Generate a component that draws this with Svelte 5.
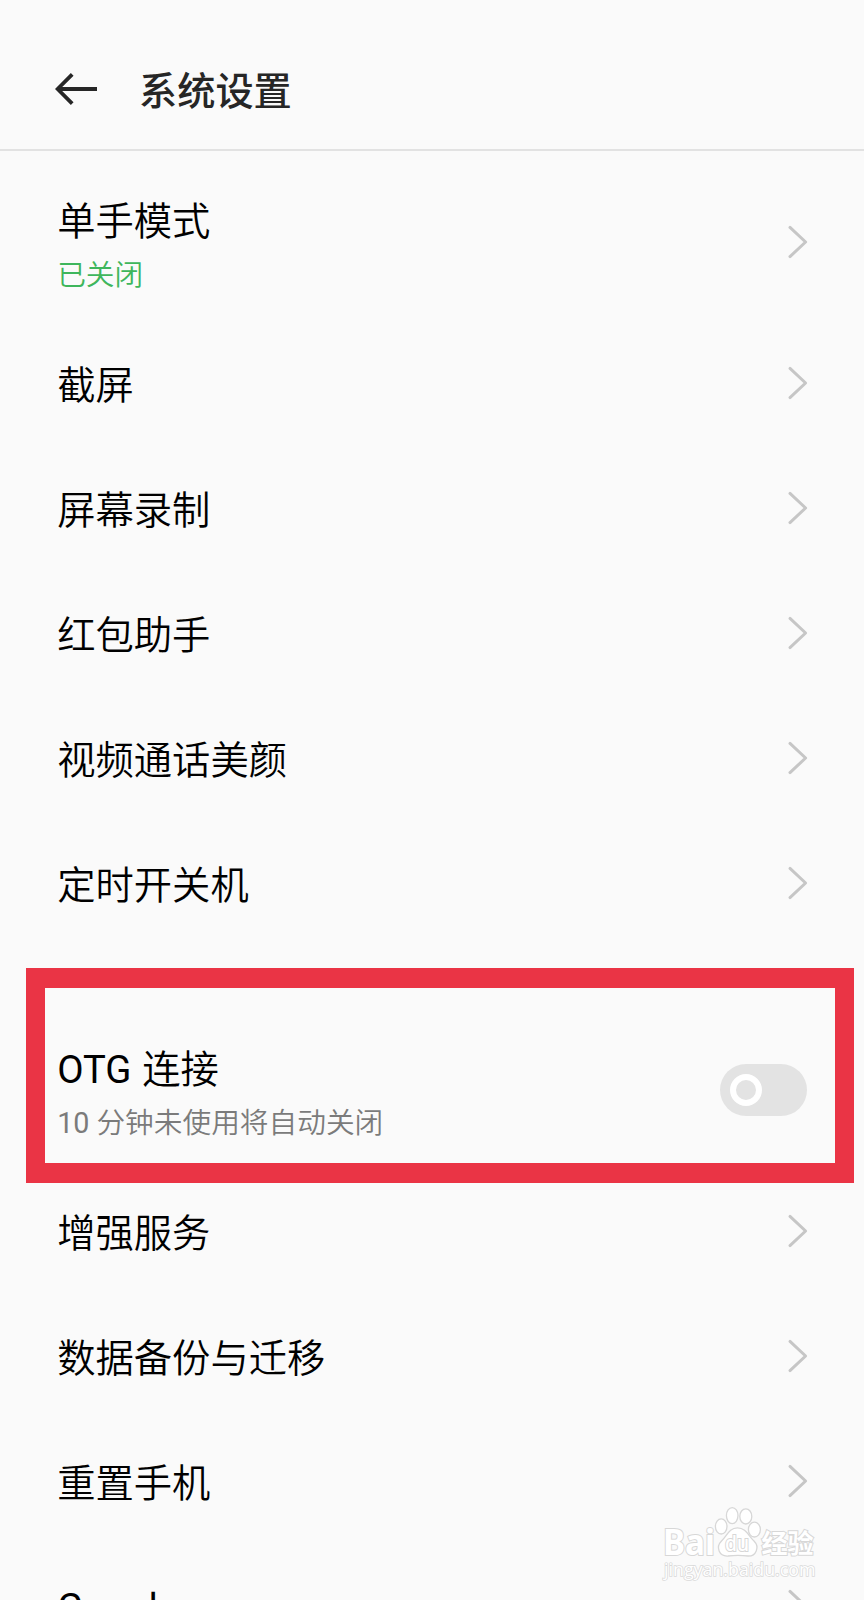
<script>
  const before = [
    { title: '单手模式', note: '已关闭' },
    { title: '截屏' },
    { title: '屏幕录制' },
    { title: '红包助手' },
    { title: '视频通话美颜' },
    { title: '定时开关机' }
  ];
  const after = [
    { title: '增强服务' },
    { title: '数据备份与迁移' },
    { title: '重置手机' },
    { title: 'Google', latin: true }
  ];
</script>

{#snippet row(item)}
  <div class="row" class:tall={item.note} class:latin={item.latin}>
    <div class="labels">
      <div class="title">{item.title}</div>
      {#if item.note}<div class="note green">{item.note}</div>{/if}
    </div>
    <svg class="chevron" width="24" height="36" viewBox="0 0 24 36">
      <path d="M4 3.4 L19.6 18 L4 32.6" />
    </svg>
  </div>
{/snippet}

<main>
  <header>
    <svg class="back" width="44" height="34" viewBox="0 0 44 34">
      <path d="M42 17 H3 M17.2 2.3 L2.6 17 L17.2 31.7" />
    </svg>
    <h1>系统设置</h1>
  </header>

  <section class="group first">
    {#each before as item}{@render row(item)}{/each}
  </section>

  <section class="group second">
    <div class="row tall otg">
      <div class="labels">
        <div class="title"><b>OTG</b> 连接</div>
        <div class="note"><b>10</b> 分钟未使用将自动关闭</div>
      </div>
      <div class="switch"><span></span></div>
      <div class="highlight"></div>
    </div>
    {#each after as item}{@render row(item)}{/each}
  </section>

  <svg class="watermark" width="164" height="84" viewBox="0 0 164 84">
    <g class="mark">
      <text class="logo" x="3" y="53.3" textLength="52" lengthAdjust="spacingAndGlyphs">Bai</text>
      <ellipse cx="61.2" cy="24.4" rx="5.8" ry="7.6" />
      <ellipse cx="72.2" cy="13.6" rx="5.8" ry="8" />
      <ellipse cx="85.8" cy="14.4" rx="6" ry="7.6" />
      <ellipse cx="94.4" cy="27.6" rx="6" ry="7.4" />
      <path d="M77.5 25.8 C86 25.8 88.5 34 94 39 C100 45 96 54.4 88 54 C81 53 75 53 68 54 C59 54.6 55.5 45 61.5 39 C67 34 69 25.8 77.5 25.8 Z" />
      <text class="du" x="65" y="49" textLength="24" lengthAdjust="spacingAndGlyphs">du</text>
      <text class="exp" x="101.5" y="51.2" textLength="52" lengthAdjust="spacingAndGlyphs">经验</text>
      <text class="url" x="4" y="73.5" textLength="151.5" lengthAdjust="spacingAndGlyphs">jingyan.baidu.com</text>
    </g>
  </svg>
</main>

<style>
  :global(body) {
    margin: 0;
    background: #fafafa;
    overflow: hidden;
  }
  main {
    position: relative;
    box-sizing: border-box;
    width: 864px;
    height: 1600px;
    overflow: hidden;
    background: #fafafa;
    color: #000;
    font-family: Roboto, 'Noto Sans CJK SC', sans-serif;
  }
  header {
    box-sizing: border-box;
    height: 151px;
    padding: 60px 0 0 54.5px;
    display: flex;
    align-items: flex-start;
    gap: 40.5px;
    border-bottom: 2px solid #e2e2e2;
  }
  .back {
    display: block;
    margin-top: 12.3px;
    fill: none;
    stroke: #262626;
    stroke-width: 3.8;
  }
  h1 {
    margin: 0;
    padding-top: 2px;
    font-size: 38.2px;
    font-weight: 500;
    line-height: 60px;
    color: #262626;
  }
  .first {
    padding-top: 12px;
  }
  .second {
    padding-top: 66px;
  }
  .row {
    position: relative;
    box-sizing: border-box;
    height: 124.8px;
    padding: 0 53px 0 57.2px;
    display: flex;
    align-items: center;
    justify-content: space-between;
  }
  .labels {
    padding-top: 6px;
  }
  .tall {
    height: 158px;
  }
  .tall .labels {
    padding-top: 6px;
  }
  .latin .labels {
    padding-top: 4px;
  }
  .title {
    font-size: 38.3px;
    line-height: 60px;
    white-space: nowrap;
    font-weight: 350;
  }
  .title b,
  .note b,
  .latin .title {
    font-weight: 400;
  }
  .title b {
    margin-right: 1.5px;
  }
  .note {
    font-size: 28.7px;
    line-height: 46px;
    color: #7b7b7b;
    white-space: nowrap;
    font-weight: 350;
  }
  .green {
    color: #3eb65c;
  }
  .chevron {
    flex: none;
    display: block;
    fill: none;
    stroke: #c6c6c6;
    stroke-width: 3;
    stroke-linecap: round;
    stroke-linejoin: round;
    margin-right: 1px;
  }
  .switch {
    box-sizing: border-box;
    width: 87px;
    height: 52px;
    padding-left: 10px;
    margin-right: 4px;
    border-radius: 26px;
    background: #e3e3e3;
    display: flex;
    align-items: center;
  }
  .switch span {
    box-sizing: border-box;
    width: 32px;
    height: 32px;
    border: 6px solid #fff;
    border-radius: 50%;
  }
  .highlight {
    position: absolute;
    left: 26px;
    top: -43px;
    box-sizing: border-box;
    width: 828px;
    height: 215px;
    border: solid #ea3445;
    border-width: 20px 19px;
  }
  .watermark {
    position: absolute;
    left: 660px;
    top: 1502px;
  }
  .mark {
    fill: #fff;
    stroke: #d7d7d7;
    stroke-width: 1.3;
  }
  .mark text {
    paint-order: stroke;
    stroke-width: 2;
    font-weight: 700;
  }
  .mark .logo {
    font-family: 'Noto Sans', sans-serif;
    font-size: 35px;
    font-weight: 700;
  }
  .mark .du {
    font-family: 'Noto Sans', sans-serif;
    font-size: 21px;
    font-weight: 500;
  }
  .exp {
    font-family: 'Noto Sans CJK SC', sans-serif;
    font-size: 26.5px;
  }
  .mark .url {
    font-family: 'Open Sans', sans-serif;
    font-size: 17.5px;
    font-weight: 400;
    stroke: #dadada;
    stroke-width: 1.6;
  }
</style>
